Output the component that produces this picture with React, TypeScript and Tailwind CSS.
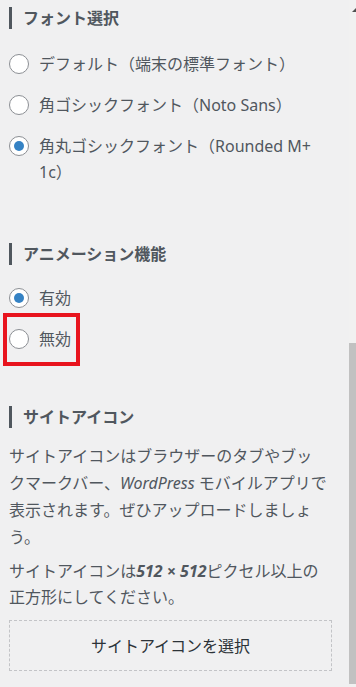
import React from "react";

const font = { fontFamily: '"Noto Sans", "Noto Sans CJK JP", sans-serif' };

function Heading({ children, className = "" }: { children: React.ReactNode; className?: string }) {
  return (
    <div className={`flex h-[22px] items-center border-l-[3px] border-[#50575e] pl-[11px] ${className}`}>
      <h3 className="text-[16px] font-bold leading-none text-[#50575e]">{children}</h3>
    </div>
  );
}

function Radio({ label, checked = false }: { label: string; checked?: boolean }) {
  return (
    <label className="flex items-start gap-[10px]">
      <span className="mt-[3px] flex h-[20px] w-[20px] shrink-0 items-center justify-center rounded-full border border-[#8c8f94] bg-white">
        {checked && <span className="h-[10px] w-[10px] rounded-full bg-[#3582c4]" />}
      </span>
      <span className="text-[16px] leading-[26px] text-[#50575e]">{label}</span>
    </label>
  );
}

export default function App() {
  return (
    <div className="flex h-[687px] w-[356px] overflow-hidden bg-[#f0f0f1]" style={font}>
      <div className="w-[349px]">
        <div className="ml-[9px] w-[323px]">
          {/* フォント選択 */}
          <Heading className="mt-[7px]">フォント選択</Heading>
          <div className="mt-[22px] flex flex-col gap-[15px]">
            <Radio label="デフォルト（端末の標準フォント）" />
            <Radio label="角ゴシックフォント（Noto Sans）" />
            <Radio label="角丸ゴシックフォント（Rounded M+ 1c）" checked />
          </div>

          {/* アニメーション機能 */}
          <Heading className="mt-[58px]">アニメーション機能</Heading>
          <div className="mt-[20px] flex flex-col gap-[15px]">
            <Radio label="有効" checked />
            <div className="relative">
              <Radio label="無効" />
              <div className="pointer-events-none absolute -left-[6px] -top-[13px] h-[53px] w-[77px] border-[4px] border-[#e8141e]" />
            </div>
          </div>

          {/* サイトアイコン */}
          <Heading className="mt-[54px]">サイトアイコン</Heading>
          <p className="mt-[15px] text-[16px] leading-[27px] text-[#50575e]">
            サイトアイコンはブラウザーのタブやブッ
            <br />
            クマークバー、<em>WordPress</em> モバイルアプリで
            <br />
            表示されます。ぜひアップロードしましょ
            <br />
            う。
          </p>
          <p className="mt-[7px] text-[16px] leading-[26px] text-[#50575e]">
            サイトアイコンは<strong><em>512 × 512</em></strong>ピクセル以上の正方形にしてください。
          </p>
          <button className="mt-[10px] flex h-[51px] w-full items-center justify-center border border-dashed border-[#c3c4c7] text-[16px] text-[#2c3338]">
            サイトアイコンを選択
          </button>
        </div>
      </div>

      {/* scrollbar */}
      <div className="flex w-[7px] flex-col bg-[#f1f1f1]">
        <svg width="7" height="5" viewBox="0 0 7 5" className="mt-[8px]">
          <polygon points="3,4 7,0 7,4" fill="#505050" />
        </svg>
        <div className="mt-[330px] h-[341px] w-[7px] bg-[#c1c1c1]" />
      </div>
    </div>
  );
}
